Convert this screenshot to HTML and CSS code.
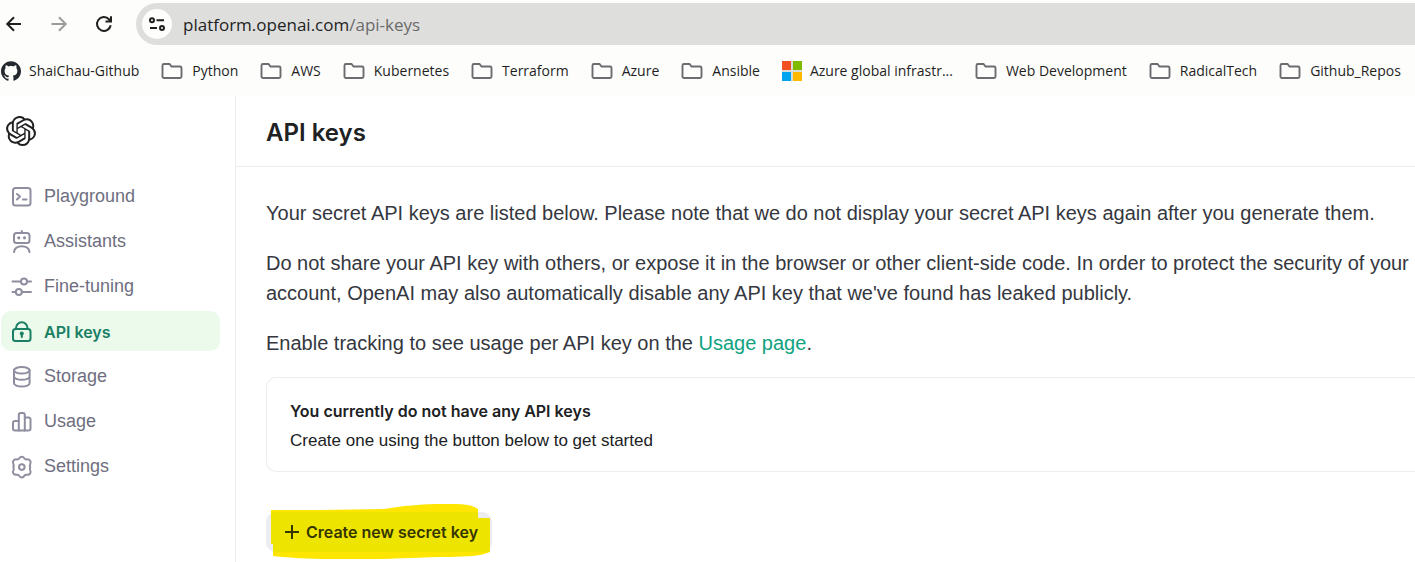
FILE: index.html
```html
<!DOCTYPE html>
<html lang="en">
<head>
<meta charset="utf-8">
<title>API keys</title>
<link rel="stylesheet" href="styles.css">
</head>
<body>
<svg class="defs" aria-hidden="true">
  <symbol id="folder" viewBox="0 0 22 18"><path d="M3 2h5.500l2 2.500h8.500a1.500 1.500 0 0 1 1.500 1.500v8.500a1.500 1.500 0 0 1-1.500 1.500H3A1.500 1.500 0 0 1 1.500 14.500v-11A1.500 1.500 0 0 1 3 2z" fill="none" stroke="#6b6c6f" stroke-width="1.900"/></symbol>
</svg>
<header class="browser">
  <div class="toolbar">
    <button class="tool" aria-label="Back"><svg width="18" height="18" viewBox="0 0 18 18"><path d="M16 9H2.500M9 2.300L2.300 9 9 15.700"/></svg></button>
    <button class="tool tool-off" aria-label="Forward"><svg width="18" height="18" viewBox="0 0 18 18"><path d="M1.500 9H15M9 2.300L15.700 9 9 15.700"/></svg></button>
    <button class="tool" aria-label="Reload"><svg width="18" height="18" viewBox="0 0 18 18"><path d="M15.700 10.200A6.900 6.900 0 1 1 14 4.300l1.600 1.700M16 1.200v5.300h-5.500"/></svg></button>
    <div class="address">
      <button class="site-info" aria-label="Site information"><svg width="18" height="18" viewBox="0 0 18 18"><circle cx="4" cy="5.300" r="2"/><path d="M8.500 5.300H16M2 12.900h7"/><circle cx="14" cy="12.900" r="2"/></svg></button>
      <span class="url">platform.openai.com<span class="url-path">/api-keys</span></span>
    </div>
  </div>
  <nav class="bookmarks" aria-label="Bookmarks">
    <a class="bookmark site" href="#"><svg width="20" height="20" viewBox="0 0 24 24"><path fill="#24292f" d="M12 .297c-6.630 0-12 5.373-12 12 0 5.303 3.438 9.800 8.205 11.385.6.113.820-.258.820-.577 0-.285-.010-1.040-.015-2.040-3.338.724-4.042-1.610-4.042-1.610C4.422 18.070 3.633 17.700 3.633 17.700c-1.087-.744.084-.729.084-.729 1.205.084 1.838 1.236 1.838 1.236 1.070 1.835 2.809 1.305 3.495.998.108-.776.417-1.305.760-1.605-2.665-.3-5.466-1.332-5.466-5.930 0-1.310.465-2.380 1.235-3.220-.135-.303-.540-1.523.105-3.176 0 0 1.005-.322 3.300 1.230.960-.267 1.980-.399 3-.405 1.020.006 2.040.138 3 .405 2.280-1.552 3.285-1.230 3.285-1.230.645 1.653.240 2.873.120 3.176.765.840 1.230 1.910 1.230 3.220 0 4.610-2.805 5.625-5.475 5.920.420.360.810 1.096.810 2.220 0 1.606-.015 2.896-.015 3.286 0 .315.210.690.825.570C20.565 22.092 24 17.592 24 12.297c0-6.627-5.373-12-12-12"/></svg>ShaiChau-Github</a>
    <a class="bookmark" href="#"><svg width="22" height="18"><use href="#folder"/></svg>Python</a>
    <a class="bookmark" href="#"><svg width="22" height="18"><use href="#folder"/></svg>AWS</a>
    <a class="bookmark" href="#"><svg width="22" height="18"><use href="#folder"/></svg>Kubernetes</a>
    <a class="bookmark" href="#"><svg width="22" height="18"><use href="#folder"/></svg>Terraform</a>
    <a class="bookmark" href="#"><svg width="22" height="18"><use href="#folder"/></svg>Azure</a>
    <a class="bookmark" href="#"><svg width="22" height="18"><use href="#folder"/></svg>Ansible</a>
    <a class="bookmark site" href="#"><svg width="20" height="20" viewBox="0 0 20 20"><path fill="#d9dcd8" d="M0 0h20v20H0z"/><path fill="#f25022" d="M0 0h9v9H0z"/><path fill="#7fba00" d="M11 0h9v9h-9z"/><path fill="#00a4ef" d="M0 11h9v9H0z"/><path fill="#ffb900" d="M11 11h9v9h-9z"/></svg>Azure global infrastr...</a>
    <a class="bookmark" href="#"><svg width="22" height="18"><use href="#folder"/></svg>Web Development</a>
    <a class="bookmark" href="#"><svg width="22" height="18"><use href="#folder"/></svg>RadicalTech</a>
    <a class="bookmark" href="#"><svg width="22" height="18"><use href="#folder"/></svg>Github_Repos</a>
  </nav>
</header>
<div class="app">
  <aside class="sidebar">
    <a class="logo" href="#" aria-label="OpenAI"><svg width="30" height="30" viewBox="0 0 24 24"><path fill="#202123" d="M22.2819 9.8211a5.9847 5.9847 0 0 0-.5157-4.9108 6.0462 6.0462 0 0 0-6.5098-2.9A6.0651 6.0651 0 0 0 4.9807 4.1818a5.9847 5.9847 0 0 0-3.9977 2.9 6.0462 6.0462 0 0 0 .7427 7.0966 5.9800 5.9800 0 0 0 .5110 4.9107 6.0510 6.0510 0 0 0 6.5146 2.9001A5.9847 5.9847 0 0 0 13.2599 24a6.0557 6.0557 0 0 0 5.7718-4.2058 5.9894 5.9894 0 0 0 3.9977-2.9001 6.0557 6.0557 0 0 0-.7475-7.0729zm-9.0220 12.6081a4.4755 4.4755 0 0 1-2.8764-1.0408l.1419-.0804 4.7783-2.7582a.7948.7948 0 0 0 .3927-.6813v-6.7369l2.0200 1.1686a.0710.0710 0 0 1 .0380.0520v5.5826a4.5040 4.5040 0 0 1-4.4945 4.4944zm-9.6607-4.1254a4.4708 4.4708 0 0 1-.5346-3.0137l.1420.0852 4.7830 2.7582a.7712.7712 0 0 0 .7806 0l5.8428-3.3685v2.3324a.0804.0804 0 0 1-.0332.0615L9.7400 19.9502a4.4992 4.4992 0 0 1-6.1408-1.6464zM2.3408 7.8956a4.4850 4.4850 0 0 1 2.3655-1.9728V11.6a.7664.7664 0 0 0 .3879.6765l5.8144 3.3543-2.0201 1.1685a.0757.0757 0 0 1-.0710 0l-4.8303-2.7865A4.5040 4.5040 0 0 1 2.3408 7.8720zm16.5963 3.8558L13.1038 8.3640 15.1192 7.2a.0757.0757 0 0 1 .0710 0l4.8303 2.7913a4.4944 4.4944 0 0 1-.6765 8.1042v-5.6772a.7900.7900 0 0 0-.4070-.6670zm2.0107-3.0231l-.1420-.0852-4.7735-2.7818a.7759.7759 0 0 0-.7854 0L9.4090 9.2297V6.8974a.0662.0662 0 0 1 .0284-.0615l4.8303-2.7866a4.4992 4.4992 0 0 1 6.6802 4.6600zM8.3065 12.8630l-2.0200-1.1638a.0804.0804 0 0 1-.0380-.0567V6.0742a4.4992 4.4992 0 0 1 7.3757-3.4537l-.1420.0805L8.7040 5.4590a.7948.7948 0 0 0-.3927.6813zm1.0976-2.3654l2.6020-1.4998 2.6069 1.4998v2.9994l-2.5974 1.4997-2.6067-1.4997Z"/></svg></a>
    <nav class="menu" aria-label="Main">
      <a class="item" href="#"><svg width="22" height="24" viewBox="0 0 22 24"><rect x="2" y="3" width="17.500" height="17.500" rx="2.500"/><path d="M6 9l3 2.500L6 14.500M12 14.500h3.500"/></svg>Playground</a>
      <a class="item" href="#"><svg width="22" height="24" viewBox="0 0 22 24"><rect x="3" y="3" width="15.500" height="10" rx="2.500"/><path d="M10.800 1v2M3 22c.5-3.500 3.500-5.800 7.800-5.800s7.300 2.300 7.800 5.800"/><circle class="solid" cx="7.800" cy="7.800" r="1.600"/><circle class="solid" cx="13.500" cy="7.800" r="1.600"/></svg>Assistants</a>
      <a class="item" href="#"><svg width="22" height="24" viewBox="0 0 22 24"><path d="M1.500 6.500h8M16.500 6.500H20M1.500 17h3M11 17h9"/><circle cx="13" cy="6.500" r="3"/><circle cx="7.800" cy="17" r="3"/></svg>Fine-tuning</a>
      <a class="item active" href="#" aria-current="page"><svg width="22" height="24" viewBox="0 0 22 24"><rect x="2" y="9" width="17.500" height="12" rx="2.500"/><path d="M5 9V8a5.700 5.700 0 0 1 11.500 0v1M10.800 14v3"/><circle class="solid" cx="10.800" cy="13.600" r="2"/></svg>API keys</a>
      <a class="item" href="#"><svg width="22" height="24" viewBox="0 0 22 24"><ellipse cx="10.800" cy="5.300" rx="7.800" ry="3.300"/><path d="M3 5.300v13c0 1.800 3.500 3.300 7.800 3.300s7.800-1.500 7.800-3.300v-13M3 11.500c0 1.800 3.500 3.300 7.800 3.300s7.800-1.500 7.800-3.300"/></svg>Storage</a>
      <a class="item" href="#"><svg width="22" height="24" viewBox="0 0 22 24"><path d="M7.800 20.500H4a2 2 0 0 1-2-2V13a2 2 0 0 1 2-2h3.800M13.800 7.500h3.700a2 2 0 0 1 2 2v9a2 2 0 0 1-2 2h-3.700"/><path d="M7.800 20.500V5a2 2 0 0 1 2-2h2a2 2 0 0 1 2 2v15.500z"/></svg>Usage</a>
      <a class="item" href="#"><svg width="22" height="24" viewBox="0 0 22 24"><path d="M10.800 1.700c1.300 0 2 .8 2.700 1.800.5.700 1.200 1 2.200.9 3.200-.3 4.800 2 3.500 4.700-.5 1.100-.7 1.900 0 3 .1.100.1.200 0 .3-.7 1.100-.5 1.900 0 3 1.300 2.500-.3 4.700-3.500 4.400-1-.1-1.700.2-2.200.9-.7 1-1.400 1.800-2.700 1.800s-2-.8-2.700-1.800c-.5-.7-1.200-1-2.200-.9-3.200.3-4.800-1.900-3.500-4.400.5-1.100.7-1.900 0-3v-.3c.7-1.100.5-1.900 0-3-1.300-2.700.3-5 3.500-4.700 1 .1 1.700-.2 2.200-.9.700-1 1.400-1.800 2.700-1.800z"/><circle cx="10.800" cy="12.100" r="2.800"/></svg>Settings</a>
    </nav>
  </aside>
  <main class="main">
    <div class="heading"><h1>API keys</h1></div>
    <div class="content">
      <p>Your secret API keys are listed below. Please note that we do not display your secret API keys again after you generate them.</p>
      <p>Do not share your API key with others, or expose it in the browser or other client-side code. In order to protect the security of your account, OpenAI may also automatically disable any API key that we've found has leaked publicly.</p>
      <p>Enable tracking to see usage per API key on the <a class="link" href="#">Usage page</a>.</p>
      <section class="card">
        <h2>You currently do not have any API keys</h2>
        <div>Create one using the button below to get started</div>
      </section>
      <button class="create">
        <svg class="marker" width="225" height="62" viewBox="0 0 225 62" aria-hidden="true"><path fill="#ffe600" d="M5 10h50L118 9C135 6 155 4 180 4c18 0 24 0 32 5v9h12v34c-12 5-22 4-40 5-30 0-50 2-80 2-35 0-60 1-97-3V44H5z"/><path fill="#ede500" d="M5 12h207v6h12v34H7v-8H5z"/></svg>
        <svg class="plus" width="14" height="14" viewBox="0 0 14 14"><path d="M7 0v14M0 7h14"/></svg>Create new secret key
      </button>
    </div>
  </main>
</div>
</body>
</html>
```
FILE: styles.css
```css
* { box-sizing: border-box; }
body {
  margin: 0;
  min-height: 100vh;
  display: flex;
  flex-direction: column;
  background: #fff;
  color: #202123;
  font-family: "Liberation Sans", Arial, sans-serif;
  overflow-x: hidden;
}
a { color: inherit; text-decoration: none; }
button { border: 0; padding: 0; background: none; font: inherit; color: inherit; }
svg { display: block; flex: none; }
h1, h2, p { margin: 0; }
h1, h2, .active, .create { font-family: Inter, "Liberation Sans", sans-serif; font-weight: 600; }
.defs { position: absolute; width: 0; height: 0; }

.browser { background: #fdfdfb; font-family: "Open Sans", "Noto Sans", sans-serif; }
.toolbar { display: flex; align-items: center; gap: 27px; padding: 3px 0 0 5px; }
.tool { fill: none; stroke: #1f1f1f; stroke-width: 2; }
.tool-off { stroke: #9c9c9b; }
.address {
  flex: 1;
  display: flex;
  align-items: center;
  gap: 11px;
  height: 42px;
  margin-left: -4px;
  padding-left: 6px;
  border-radius: 21px 0 0 21px;
  background: #dededd;
}
.site-info {
  width: 30px;
  height: 30px;
  display: grid;
  place-items: center;
  border-radius: 50%;
  background: #fdfdfb;
  fill: none;
  stroke: #1f1f1f;
  stroke-width: 2;
}
.url { font-size: 17px; color: #1f1f1f; }
.url-path { color: #6a6a69; }
.bookmarks { display: flex; align-items: center; gap: 22px; height: 51px; padding-left: 1px; white-space: nowrap; }
.bookmark { display: flex; align-items: center; gap: 9px; font-size: 14px; color: #1f1f1f; }
.site { gap: 8px; }

.app { flex: 1; display: flex; }
.sidebar { width: 236px; flex: none; border-right: 1px solid #ececf1; padding: 20px 15px 0 1px; }
.logo { display: block; padding-left: 5px; }
.menu { display: flex; flex-direction: column; gap: 5px; margin-top: 30px; }
.item {
  display: flex;
  align-items: center;
  gap: 11px;
  height: 40px;
  padding: 1px 0 0 10px;
  border-radius: 10px;
  font-size: 18px;
  color: #6e6e80;
}
.item svg { fill: none; stroke: #8e8ea0; stroke-width: 2; stroke-linecap: round; stroke-linejoin: round; }
.item .solid { fill: #8e8ea0; stroke: none; }
.item.active { background: #ebfaeb; color: #1a7f64; font-size: 16px; }
.item.active svg { stroke: #1a7f64; }
.item.active .solid { fill: #1a7f64; }

.main { flex: 1; min-width: 0; }
.heading { height: 71px; display: flex; align-items: center; padding: 3px 0 0 30px; border-bottom: 1px solid #ececf1; }
h1 { font-size: 24px; line-height: 30px; }
.content { padding: 31px 0 0 30px; color: #353740; font-size: 20px; line-height: 30px; }
.content p { margin-bottom: 20px; }
.link { color: #10a37f; }
.card {
  margin-top: -1px;
  padding: 18px 23px 15px;
  border: 1px solid #ececf1;
  border-right: 0;
  border-radius: 10px 0 0 10px;
  color: #202123;
  font-size: 17px;
}
h2 { font-size: 16px; line-height: 30px; }
.create {
  position: relative;
  z-index: 0;
  display: flex;
  align-items: center;
  gap: 7px;
  height: 40px;
  margin-top: 40px;
  padding: 0 14px 0 19px;
  border-radius: 10px;
  background: #ececf1;
  color: #353500;
  font-size: 16px;
}
.marker { position: absolute; left: 0; top: -12px; z-index: -1; }
.plus { stroke: #353500; stroke-width: 2; }
```
